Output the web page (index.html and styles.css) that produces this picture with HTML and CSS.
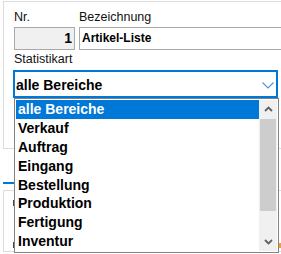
FILE: index.html
```html
<!DOCTYPE html>
<html lang="de">
<head>
<meta charset="utf-8">
<title>Statistik</title>
<link rel="stylesheet" href="styles.css">
</head>
<body>
<div class="page">
  <div class="group">
    <div class="fields">
      <div class="field">
        <div class="label">Nr.</div>
        <div class="box box-nr">1</div>
      </div>
      <div class="field">
        <div class="label">Bezeichnung</div>
        <div class="box box-bez">Artikel-Liste</div>
      </div>
    </div>
    <div class="label label-stat">Statistikart</div>
    <div class="combo">
      <span class="combo-text">alle Bereiche</span>
      <svg class="combo-chev" width="12" height="7" viewBox="0 0 12 7"><path d="M0.5 0.5 L6 6 L11.5 0.5" fill="none" stroke="#4f93d6" stroke-width="1.1"/></svg>
    </div>
  </div>
  <div class="tabs">
    <div class="tab-strip"><div class="tab-active"></div></div>
    <div class="tab-panel">
      <div class="panel-row"><span class="mark"></span></div>
      <div class="panel-row"><span class="mark"></span><span class="orange"></span></div>
    </div>
  </div>

  <div class="dropdown">
    <ul class="list">
      <li class="item selected">alle Bereiche</li>
      <li class="item">Verkauf</li>
      <li class="item">Auftrag</li>
      <li class="item">Eingang</li>
      <li class="item">Bestellung</li>
      <li class="item">Produktion</li>
      <li class="item">Fertigung</li>
      <li class="item">Inventur</li>
    </ul>
    <div class="scrollbar">
      <div class="sb-btn"><svg width="9" height="6" viewBox="0 0 9 6"><path d="M1 5 L4.5 1.5 L8 5" fill="none" stroke="#606060" stroke-width="1.8"/></svg></div>
      <div class="sb-track"><div class="sb-thumb"></div></div>
      <div class="sb-btn"><svg width="9" height="6" viewBox="0 0 9 6"><path d="M1 1 L4.5 4.5 L8 1" fill="none" stroke="#606060" stroke-width="1.8"/></svg></div>
    </div>
  </div>
</div>
</body>
</html>
```
FILE: styles.css
```css
* { box-sizing: border-box; }
html, body {
  margin: 0;
  padding: 0;
  background: #ffffff;
}
body {
  width: 281px;
  height: 254px;
  overflow: hidden;
  font-family: "Liberation Sans", Arial, sans-serif;
  color: #000;
}
.page {
  position: relative;
  width: 281px;
  height: 254px;
}
.group {
  margin: 1px 0 0 3px;
  height: 148px;
  border: 1px solid #dcdcdc;
  border-right: none;
  padding: 8px 0 0 10px;
}
.fields {
  display: grid;
  grid-template-columns: 61px 1fr;
  column-gap: 4px;
}
.label {
  font-size: 12.5px;
  line-height: 14px;
  white-space: nowrap;
  color: #111;
}
.box {
  margin-top: 3px;
  height: 23px;
  border: 1px solid #a9a9a9;
  line-height: 21px;
  font-weight: bold;
  white-space: nowrap;
}
.box-nr {
  background: #f0f0f0;
  font-size: 14px;
  text-align: right;
  padding-right: 2px;
}
.box-bez {
  background: #fff;
  border-right: none;
  font-size: 12px;
  padding-left: 2px;
}
.label-stat {
  margin-top: 2px;
}
.combo {
  margin: 4px 0 0 -1px;
  width: 265px;
  height: 28px;
  border: 2px solid #0078d7;
  display: flex;
  align-items: flex-start;
  justify-content: space-between;
  padding: 2px 0 0 1px;
}
.combo-text {
  font-size: 14px;
  font-weight: bold;
  line-height: 22px;
}
.combo-chev {
  margin: 8px 2px 0 0;
}
.tabs {
  margin-left: 3px;
}
.tab-strip {
  height: 41px;
  padding-top: 33px;
}
.tab-active {
  width: 60px;
  height: 2px;
  background: #0078d7;
}
.tab-panel {
  height: 62px;
  border: 1px solid #dcdcdc;
  border-right: none;
  padding: 9px 0 0 9px;
}
.panel-row {
  display: flex;
  justify-content: space-between;
  align-items: center;
  height: 30px;
}
.panel-row:first-child {
  align-items: flex-start;
}
.mark {
  width: 2px;
  height: 6px;
  background: #444;
}
.orange {
  width: 2px;
  height: 5px;
  background: #f0a030;
}
.dropdown {
  position: absolute;
  left: 14px;
  top: 97px;
  width: 265px;
  height: 155px;
  border: 1px solid #828282;
  background: #fff;
  padding: 1px;
  display: flex;
}
.list {
  list-style: none;
  margin: 0;
  padding: 0;
  flex: 1;
}
.item {
  height: 18.875px;
  line-height: 18.875px;
  font-size: 14px;
  font-weight: bold;
  padding-left: 2px;
  white-space: nowrap;
}
.item.selected {
  background: #0078d7;
  color: #fff;
}
.scrollbar {
  width: 18px;
  background: #f0f0f0;
  display: flex;
  flex-direction: column;
}
.sb-btn {
  height: 18px;
  display: flex;
  align-items: center;
  justify-content: center;
}
.sb-track {
  flex: 1;
  padding: 1px 1px 0 1px;
}
.sb-thumb {
  height: 92px;
  background: #cdcdcd;
}
```
